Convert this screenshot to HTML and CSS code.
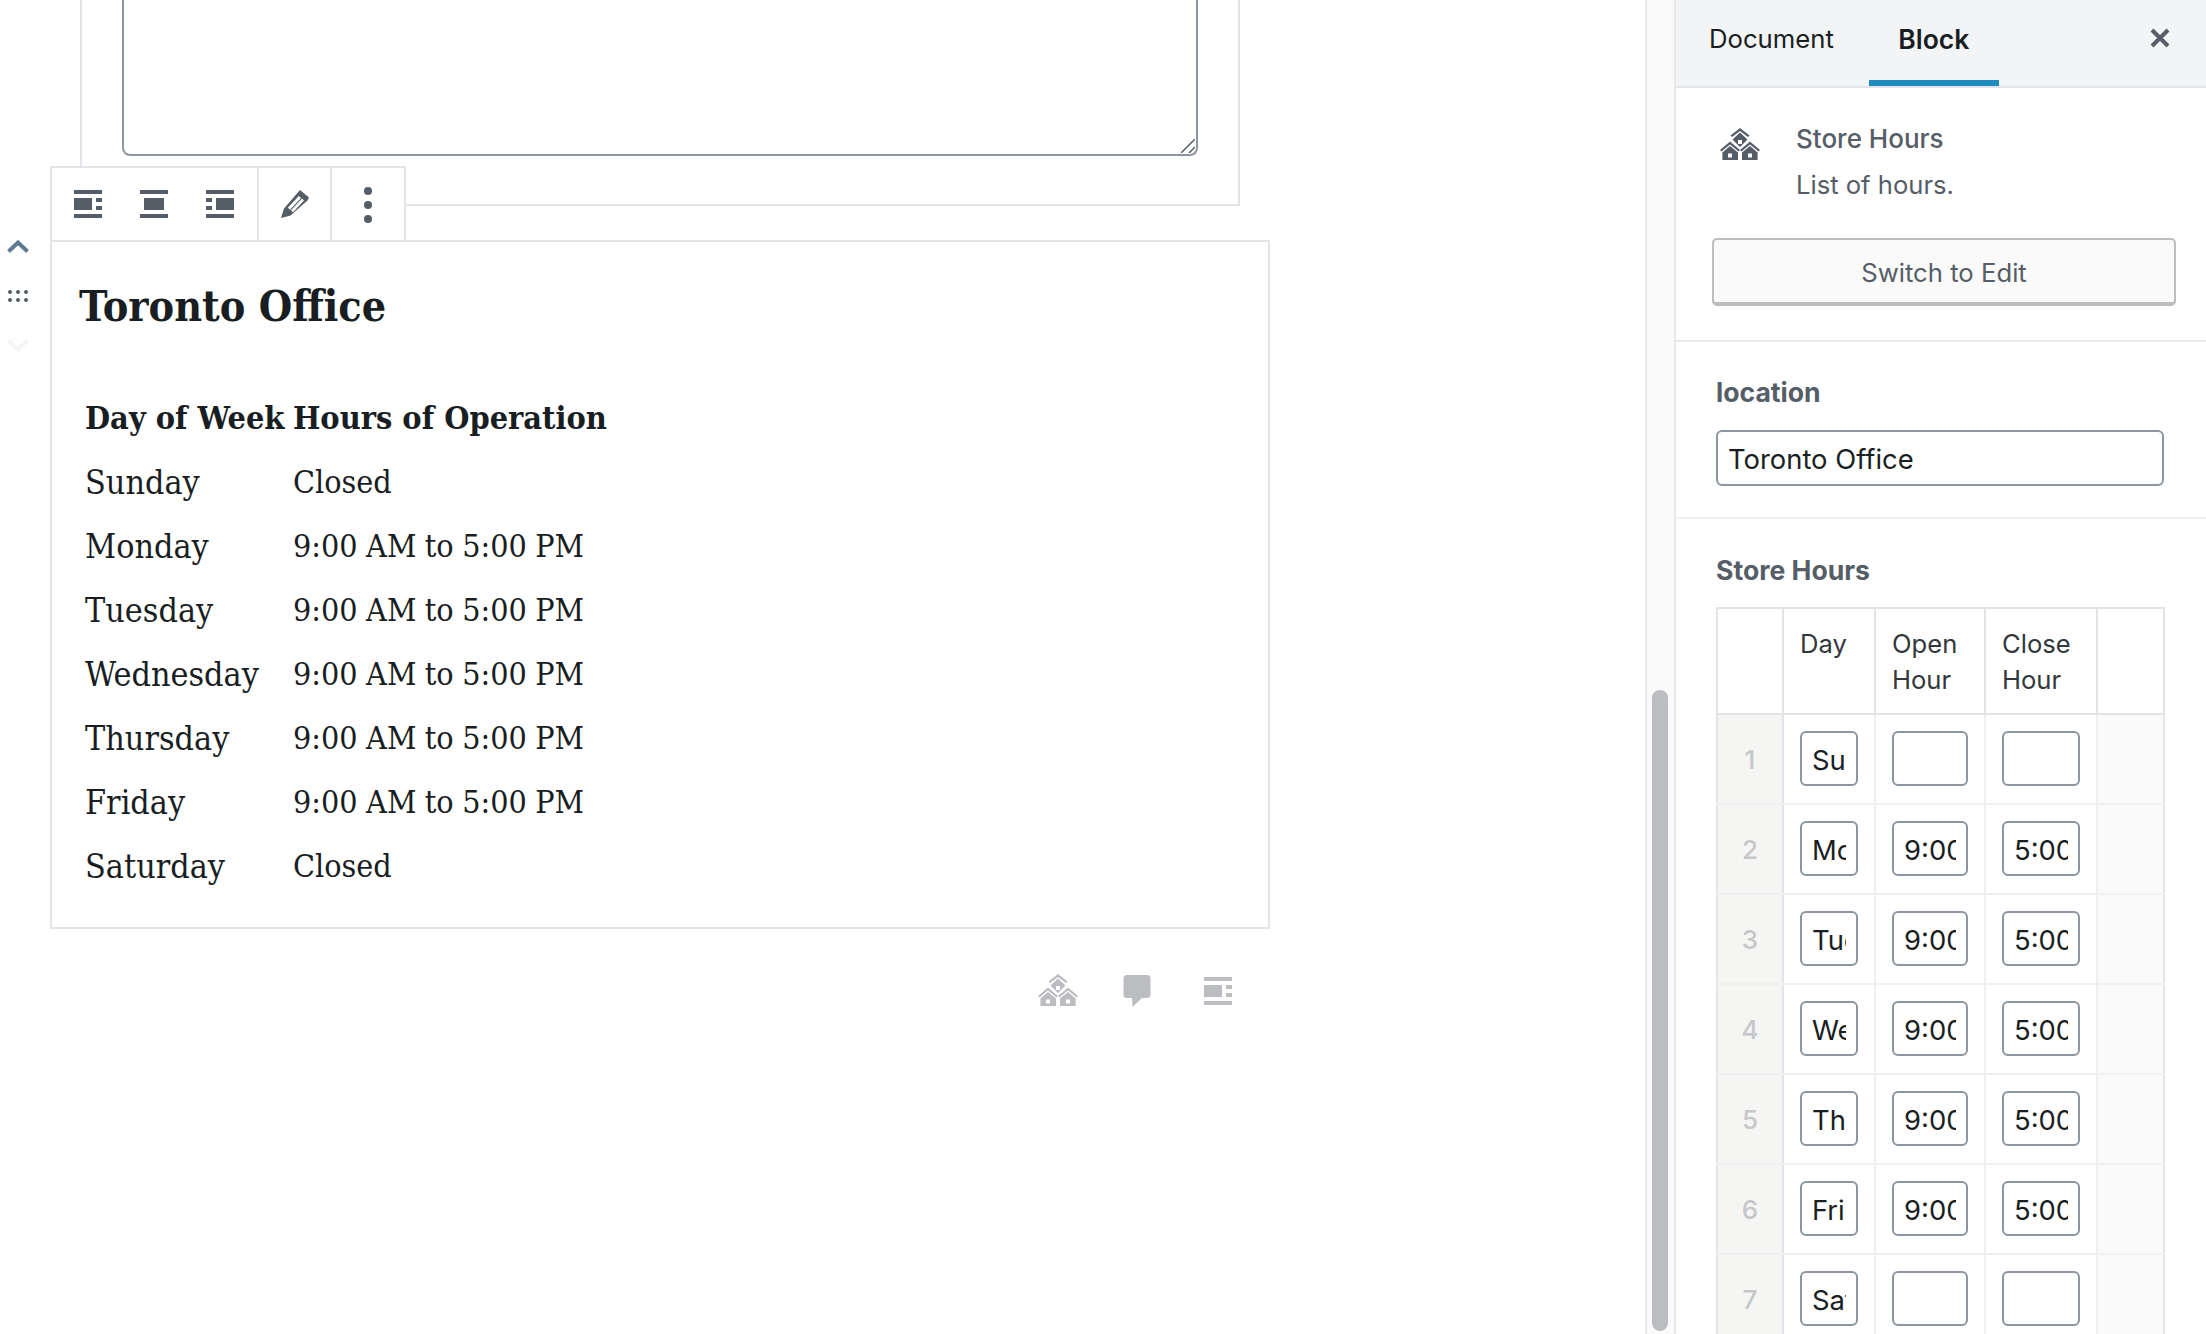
FILE: index.html
```html
<!DOCTYPE html>
<html lang="en">
<head>
<meta charset="utf-8">
<title>Store Hours block</title>
<link rel="stylesheet" href="styles.css">
</head>
<body>
<svg class="defs" width="0" height="0" aria-hidden="true">
  <symbol id="house" viewBox="0 0 40 33">
    <path d="M20 0L29.600 7.400 28 9 20 3 12 9 10.400 7.400Z"/>
    <path fill-rule="evenodd" d="M20 4.600L27.500 11.500 20 19 12.500 11.500ZM18 12V16H22V12Z"/>
    <path d="M10 13.600L20 22 18.600 23.600 10 16.400 1.400 23.600 0 22Z"/>
    <path d="M30 13.600L40 22 38.600 23.600 30 16.400 21.400 23.600 20 22Z"/>
    <path fill-rule="evenodd" d="M10 18L18 24.600V32H2.400V24.600ZM8 25.500V29.500H12V25.500Z"/>
    <path fill-rule="evenodd" d="M30 18L37.600 24.600V32H22V24.600ZM28 25.500V29.500H32V25.500Z"/>
  </symbol>
  <symbol id="align-wide" viewBox="0 0 28 28">
    <path d="M0 0H28V4H0ZM0 24H28V28H0ZM0 8H18V20H0ZM22 8H28V12H22ZM22 16H28V20H22Z"/>
  </symbol>
</svg>

<main class="editor">
  <div class="prev-block">
    <div class="textarea-stub">
      <svg class="grip" width="14" height="14" viewBox="0 0 14 14" aria-hidden="true"><path d="M14 0L0 14M14 8L8 14" stroke="#555d66" stroke-width="1.500" fill="none"/></svg>
    </div>
  </div>

  <div class="block-row">
    <div class="movers">
      <svg class="arrow-up" width="22" height="14" viewBox="0 0 22 14" aria-hidden="true"><path d="M1.500 12.500L11 3.500 20.500 12.500" fill="none" stroke="#5f7a93" stroke-width="4"/></svg>
      <svg class="drag" width="20" height="12" viewBox="0 0 20 12" aria-hidden="true"><g fill="#555d66"><circle cx="2" cy="2" r="2"/><circle cx="10" cy="2" r="2"/><circle cx="18" cy="2" r="2"/><circle cx="2" cy="10" r="2"/><circle cx="10" cy="10" r="2"/><circle cx="18" cy="10" r="2"/></g></svg>
      <svg class="arrow-down" width="22" height="14" viewBox="0 0 22 14" aria-hidden="true"><path d="M1.500 1.500L11 10.500 20.500 1.500" fill="none" stroke="#f5f5f5" stroke-width="4"/></svg>
    </div>

    <div class="block-col">
      <div class="toolbar">
        <div class="tool-group tool-group-align">
          <svg class="ic" width="28" height="28" aria-hidden="true"><use href="#align-wide"/></svg>
          <svg class="ic" width="28" height="28" viewBox="0 0 28 28" aria-hidden="true"><path d="M0 0H28V4H0ZM0 24H28V28H0ZM4 8H24V20H4Z"/></svg>
          <svg class="ic" width="28" height="28" viewBox="0 0 28 28" aria-hidden="true"><path d="M0 0H28V4H0ZM0 24H28V28H0ZM10 8H28V20H10ZM0 8H6V12H0ZM0 16H6V20H0Z"/></svg>
        </div>
        <div class="tool-group tool-group-edit">
          <svg class="ic" width="28" height="28" viewBox="0 0 28 28" aria-hidden="true"><path fill-rule="evenodd" d="M19 0L28 7.500 26.500 10.500 9.500 25.500 0 28 3 18.500ZM17.800 6L6.800 17.800 9 19.800 20 8ZM21 8.500L10 20.300 12 22.300 23 10.500Z"/></svg>
        </div>
        <div class="tool-group tool-group-more">
          <span class="dot"></span><span class="dot"></span><span class="dot"></span>
        </div>
      </div>

      <section class="hours-block">
        <h2 class="office">Toronto Office</h2>
        <table class="hours">
          <thead><tr><th>Day of Week</th><th>Hours of Operation</th></tr></thead>
          <tbody>
            <tr><td>Sunday</td><td>Closed</td></tr>
            <tr><td>Monday</td><td>9:00 AM to 5:00 PM</td></tr>
            <tr><td>Tuesday</td><td>9:00 AM to 5:00 PM</td></tr>
            <tr><td>Wednesday</td><td>9:00 AM to 5:00 PM</td></tr>
            <tr><td>Thursday</td><td>9:00 AM to 5:00 PM</td></tr>
            <tr><td>Friday</td><td>9:00 AM to 5:00 PM</td></tr>
            <tr><td>Saturday</td><td>Closed</td></tr>
          </tbody>
        </table>
      </section>

      <div class="inserters">
        <svg class="house-grey" width="40" height="33" aria-hidden="true"><use href="#house"/></svg>
        <svg class="comment" width="28" height="32" viewBox="0 0 28 32" aria-hidden="true"><path d="M4 0H24A3.500 3.500 0 0 1 27.500 3.500V19.500A3.500 3.500 0 0 1 24 23H19L9.500 32 9 23H4A3.500 3.500 0 0 1 0.500 19.500V3.500A3.500 3.500 0 0 1 4 0Z"/></svg>
        <svg class="align-grey" width="28" height="28" aria-hidden="true"><use href="#align-wide"/></svg>
      </div>
    </div>
  </div>
</main>

<div class="track"><div class="thumb"></div></div>

<aside class="sidebar">
  <header class="side-head">
    <div class="tab">Document</div>
    <div class="tab tab-active">Block</div>
    <svg class="close" width="20" height="20" viewBox="0 0 20 20" aria-hidden="true"><path d="M2 2L18 18M18 2L2 18" stroke="#555d66" stroke-width="4" fill="none"/></svg>
  </header>

  <section class="card">
    <div class="card-top">
      <svg class="house-dark" width="40" height="33" aria-hidden="true"><use href="#house"/></svg>
      <div class="card-text">
        <div class="card-title">Store Hours</div>
        <div class="card-desc">List of hours.</div>
      </div>
    </div>
    <button class="switch" type="button">Switch to Edit</button>
  </section>

  <section class="panel panel-location">
    <label class="label" for="loc">location</label>
    <input class="field" id="loc" type="text" value="Toronto Office" readonly>
  </section>

  <section class="panel-hours">
    <div class="label">Store Hours</div>
    <table class="grid">
      <colgroup><col class="c0"><col class="c1"><col class="c2"><col class="c3"><col class="c4"></colgroup>
      <thead>
        <tr><th></th><th>Day</th><th>Open Hour</th><th>Close Hour</th><th></th></tr>
      </thead>
      <tbody>
        <tr><td class="num">1</td><td><input class="cell w-day" value="Sunday" readonly></td><td><input class="cell w-open" value="" readonly></td><td><input class="cell w-close" value="" readonly></td><td class="end"></td></tr>
        <tr><td class="num">2</td><td><input class="cell w-day" value="Monday" readonly></td><td><input class="cell w-open" value="9:00 AM" readonly></td><td><input class="cell w-close" value="5:00 PM" readonly></td><td class="end"></td></tr>
        <tr><td class="num">3</td><td><input class="cell w-day" value="Tuesday" readonly></td><td><input class="cell w-open" value="9:00 AM" readonly></td><td><input class="cell w-close" value="5:00 PM" readonly></td><td class="end"></td></tr>
        <tr><td class="num">4</td><td><input class="cell w-day" value="Wednesday" readonly></td><td><input class="cell w-open" value="9:00 AM" readonly></td><td><input class="cell w-close" value="5:00 PM" readonly></td><td class="end"></td></tr>
        <tr><td class="num">5</td><td><input class="cell w-day" value="Thursday" readonly></td><td><input class="cell w-open" value="9:00 AM" readonly></td><td><input class="cell w-close" value="5:00 PM" readonly></td><td class="end"></td></tr>
        <tr><td class="num">6</td><td><input class="cell w-day" value="Friday" readonly></td><td><input class="cell w-open" value="9:00 AM" readonly></td><td><input class="cell w-close" value="5:00 PM" readonly></td><td class="end"></td></tr>
        <tr><td class="num">7</td><td><input class="cell w-day" value="Saturday" readonly></td><td><input class="cell w-open" value="" readonly></td><td><input class="cell w-close" value="" readonly></td><td class="end"></td></tr>
      </tbody>
    </table>
  </section>
</aside>
</body>
</html>
```
FILE: styles.css
```css
* { box-sizing: border-box; }
html, body { margin: 0; height: 100%; overflow: hidden; }
body {
  display: flex;
  width: 2206px;
  height: 1334px;
  background: #fff;
  font-family: Inter, "Noto Sans", "Liberation Sans", sans-serif;
  color: #191e23;
}
.defs { position: absolute; }

/* Editor column */
.editor { width: 1645px; flex: none; }
.prev-block {
  width: 1160px;
  height: 206px;
  margin-left: 80px;
  padding-left: 40px;
  border: 2px solid #e2e4e7;
  border-top: 0;
}
.textarea-stub {
  position: relative;
  width: 1076px;
  height: 156px;
  border: 2px solid #8d96a0;
  border-top: 0;
  border-radius: 0 0 8px 8px;
}
.grip { position: absolute; right: 1px; bottom: 1px; }

.block-row { display: flex; margin-top: -40px; }
.movers {
  width: 50px;
  flex: none;
  display: flex;
  flex-direction: column;
  align-items: flex-start;
  padding: 73px 0 0 7px;
}
.drag { margin: 37px 0 0 1px; }
.arrow-down { margin-top: 37px; }

.block-col { width: 1220px; flex: none; }
.toolbar {
  position: relative;
  display: flex;
  width: 356px;
  height: 76px;
  padding-bottom: 2px;
  background: #fff;
  border: 2px solid #e2e4e7;
  border-bottom: 0;
}
.tool-group { display: flex; align-items: center; height: 74px; fill: #555d66; }
.tool-group + .tool-group { border-left: 2px solid #e2e4e7; }
.tool-group-align { width: 205px; gap: 38px; padding-left: 22px; }
.tool-group-edit { width: 73px; padding-left: 22px; }
.tool-group-more { flex: 1; flex-direction: column; justify-content: center; gap: 6px; }
.dot { width: 8px; height: 8px; border-radius: 50%; background: #555d66; }
.ic { display: block; margin-bottom: 2px; }

.hours-block {
  position: relative;
  height: 689px;
  margin-top: -2px;
  padding: 36px 0 0 26px;
  border: 2px solid #e2e4e7;
}
.office {
  margin: 0 0 52px 1px;
  font-family: "DejaVu Serif Condensed", "Noto Serif", "DejaVu Serif", serif;
  font-size: 42.7px;
  line-height: 56px;
  font-weight: 700;
}
.hours {
  border-collapse: collapse;
  table-layout: fixed;
  width: 600px;
  margin-left: 7px;
  font-family: "DejaVu Serif Condensed", "Noto Serif", "DejaVu Serif", serif;
  font-size: 32px;
}
.hours th, .hours td { height: 64px; padding: 0; text-align: left; white-space: nowrap; font-weight: 400; }
.hours th { font-weight: 700; font-size: 32.2px; }
.hours th:first-child, .hours td:first-child { width: 208px; }
.hours td { word-spacing: -0.7px; }
.hours td:first-child { font-size: 33.8px; }

.inserters {
  display: flex;
  align-items: flex-start;
  padding: 45px 0 0 988px;
  fill: #bcbdc0;
}
.comment { margin: 1px 0 0 45px; }
.align-grey { margin: 3px 0 0 53px; }

/* Scroll track */
.track {
  width: 31px;
  flex: none;
  height: 100%;
  padding: 690px 0 0 5px;
  background: #fafafa;
  border-left: 2px solid #e8e8e8;
  border-right: 2px solid #e8e8e8;
}
.thumb { width: 16px; height: 641px; border-radius: 8px; background: #bcbdc0; }

/* Sidebar */
.sidebar { width: 530px; flex: none; color: #555d66; }
.side-head {
  display: flex;
  height: 88px;
  background: #f3f4f5;
  border-bottom: 2px solid #e2e4e7;
  padding-left: 33px;
  color: #191e23;
}
.tab { font-size: 25.7px; line-height: 78px; height: 86px; }
.tab-active {
  margin-left: 35px;
  width: 130px;
  flex: none;
  text-align: center;
  font-size: 26.5px;
  font-weight: 600;
  border-bottom: 6px solid #1e8cbe;
}
.close { margin: 28px 0 0 151px; flex: none; }

.card { height: 254px; padding: 40px 30px 0 36px; border-bottom: 2px solid #e8eaeb; }
.card-top { display: flex; }
.house-dark { fill: #555d66; margin: 0 0 0 8px; flex: none; }
.card-text { margin-left: 36px; margin-top: -12px; }
.card-title { font-size: 26px; line-height: 46px; font-weight: 500; }
.card-desc { font-size: 25.6px; line-height: 46px; }
.switch {
  display: block;
  width: 464px;
  height: 68px;
  margin-top: 30px;
  padding-top: 3px;
  background: #fafafa;
  border: 2px solid #bcbdc0;
  border-bottom-width: 4px;
  border-radius: 5px;
  color: #555d66;
  font: 400 25.7px Inter, "Noto Sans", sans-serif;
}

.panel { border-bottom: 2px solid #f0f0f0; }
.panel-location { height: 177px; padding: 30px 40px 0 40px; }
.label { display: block; font-size: 26.6px; line-height: 40px; font-weight: 700; }
.field {
  display: block;
  width: 448px;
  height: 56px;
  margin-top: 18px;
  padding: 2px 10px 0;
  border: 2px solid #8d96a0;
  border-radius: 6px;
  font: 400 27.4px Inter, "Noto Sans", sans-serif;
  color: #191e23;
  outline: 0;
}

.panel-hours { padding: 31px 0 0 40px; }
.grid {
  border-collapse: collapse;
  table-layout: fixed;
  width: 447px;
  margin-top: 17px;
  color: #32373c;
}
.c0 { width: 66px; }
.c1 { width: 92px; }
.c2 { width: 110px; }
.c3 { width: 112px; }
.c4 { width: 67px; }
.grid th {
  height: 106px;
  padding: 17px 14px 0 16px;
  vertical-align: top;
  text-align: left;
  font-size: 25.6px;
  line-height: 36px;
  font-weight: 400;
  border: 2px solid #e2e4e7;
}
.grid td {
  height: 90px;
  padding: 0 0 2px 16px;
  border: 2px solid #f0f0f0;
}
.grid td:first-child, .grid td:last-child { border-left-color: #e2e4e7; border-right-color: #e2e4e7; }
.grid td.num {
  padding: 0;
  text-align: center;
  background: #f5f5f4;
  color: #c5c7c9;
  font-size: 26px;
  font-weight: 500;
}
.grid td.end { background: #fafafa; padding: 0; }
.cell {
  display: block;
  height: 55px;
  padding: 4px 10px 0;
  border: 2px solid #8d96a0;
  border-radius: 6px;
  font: 400 27.4px Inter, "Noto Sans", sans-serif;
  color: #191e23;
  background: #fff;
  outline: 0;
}
.w-day { width: 58px; }
.w-open { width: 76px; }
.w-close { width: 78px; }
```
